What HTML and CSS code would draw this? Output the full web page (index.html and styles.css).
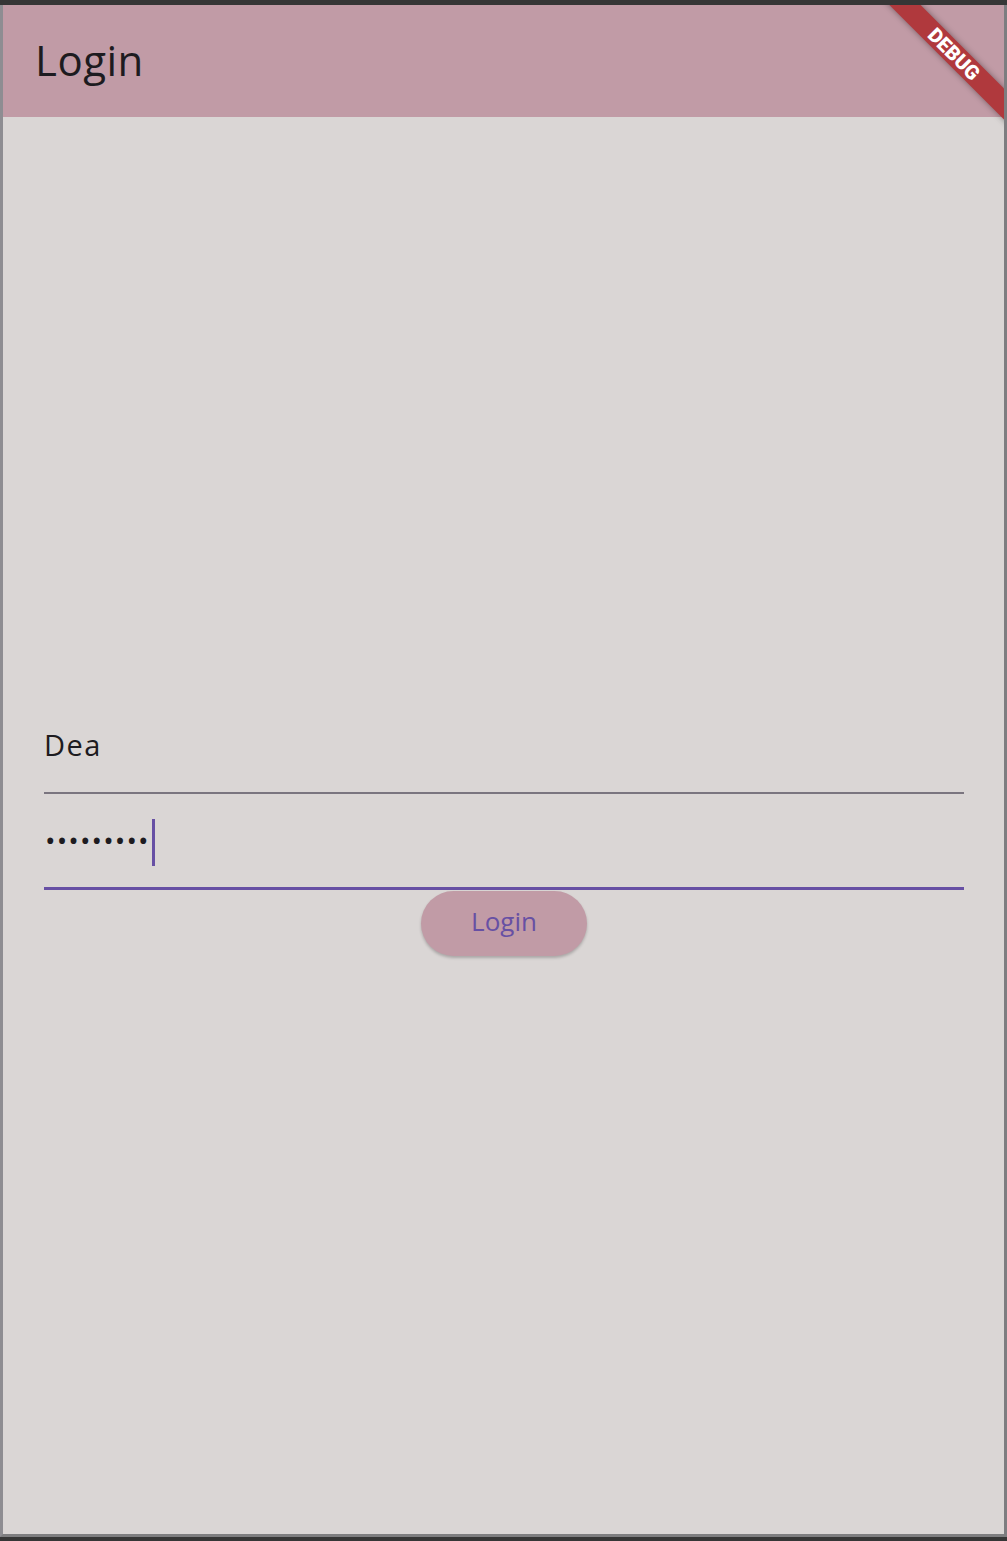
FILE: index.html
```html
<!DOCTYPE html>
<html>
<head>
<meta charset="utf-8">
<link rel="stylesheet" href="styles.css">
</head>
<body>
<div class="window">
  <div class="app">
    <header class="appbar"><h1 class="title">Login</h1></header>
    <main class="content">
      <div class="form">
        <div class="field field-name"><span class="value">Dea</span></div>
        <div class="field field-pass"><span class="dots">•••••••••</span><span class="cursor"></span></div>
        <button class="btn">Login</button>
      </div>
    </main>
    <div class="banner">DEBUG</div>
  </div>
</div>
</body>
</html>
```
FILE: styles.css
```css
html, body { margin: 0; padding: 0; }
body {
  background: #363636;
  width: 1007px;
  height: 1541px;
  overflow: hidden;
  font-family: "Open Sans", "Noto Sans", sans-serif;
}
.window {
  margin-top: 5px;
  width: 1007px;
  height: 1532px;
  box-sizing: border-box;
  border-left: 3px solid #8e8d92;
  border-right: 3px solid #7d7d80;
  border-bottom: 3px solid #7e7e80;
  background: #dad6d5;
}
.app {
  position: relative;
  overflow: hidden;
  height: 100%;
  display: flex;
  flex-direction: column;
}
.appbar {
  height: 112px;
  flex: none;
  background: #c19ba6;
  display: flex;
  align-items: center;
  padding-left: 32px;
}
.title {
  margin: 0 0 2px 0;
  font-weight: 400;
  font-size: 42px;
  color: #1d1b20;
  line-height: 1;
  letter-spacing: 0.5px;
}
.content {
  flex: 1;
  display: flex;
  flex-direction: column;
  justify-content: center;
  padding: 0 40px 0 41px;
}
.form {
  display: flex;
  flex-direction: column;
  align-items: center;
}
.field {
  width: 100%;
  box-sizing: border-box;
  display: flex;
  align-items: flex-end;
  padding-left: 1px;
}
.field-name {
  height: 98px;
  border-bottom: 2px solid #7a757f;
  padding-bottom: 33px;
}
.value {
  font-size: 29px;
  line-height: 1;
  color: #1d1b20;
  letter-spacing: 1.5px;
  margin-left: -1px;
}
.field-pass {
  height: 96px;
  border-bottom: 3px solid #6750a4;
  padding-bottom: 21px;
}
.dots {
  font-size: 28px;
  line-height: 43px;
  height: 47px;
  color: #1d1b20;
  letter-spacing: 1.1px;
}
.cursor {
  display: block;
  width: 3px;
  height: 47px;
  margin-left: 2px;
  background: #6750a4;
}
.btn {
  margin-top: 1px;
  width: 166px;
  height: 65px;
  border: none;
  border-radius: 33px;
  background: #c19ba6;
  color: #6750a4;
  font-family: "Open Sans", "Noto Sans", sans-serif;
  font-size: 26px;
  line-height: 1;
  box-shadow: 0 2px 3px rgba(0,0,0,0.22);
  padding: 0 0 5px 0;
}
.banner {
  position: absolute;
  top: 38px;
  right: -60px;
  width: 220px;
  height: 22px;
  line-height: 22px;
  background: #b0393d;
  color: #fff;
  font-family: Roboto, "Liberation Sans", sans-serif;
  font-weight: 900;
  font-size: 20px;
  text-align: center;
  transform: rotate(45deg);
  box-shadow: 0 0 6px rgba(0,0,0,0.4);
}
```
